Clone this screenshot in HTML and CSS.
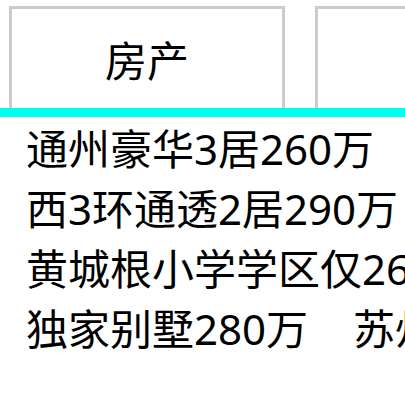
FILE: index.html
```html
<!DOCTYPE html>
<html lang="zh-CN">
<head>
<meta charset="utf-8">
<title>房产</title>
<link rel="stylesheet" href="styles.css">
</head>
<body>
<div class="tabs">
  <div class="tab">房产</div>
  <div class="tab"></div>
</div>
<div class="panel">
  <div class="row">通州豪华3居260万</div>
  <div class="row">西3环通透2居290万</div>
  <div class="row">黄城根小学学区仅260万</div>
  <div class="row"><span class="item">独家别墅280万</span><span class="item">苏州园林独栋</span></div>
</div>
</body>
</html>
```

FILE: styles.css
```css
html, body {
  margin: 0;
  padding: 0;
  background: #fff;
  overflow: hidden;
}
body {
  font-family: "Noto Sans", "Noto Sans CJK SC", sans-serif;
  font-size: 42px;
  color: #000;
  width: 405px;
  height: 404px;
}
.tabs {
  display: flex;
  gap: 30px;
  padding: 6px 0 0 9px;
}
.tab {
  box-sizing: border-box;
  flex: 0 0 276px;
  height: 102px;
  border: 3px solid #cccccc;
  border-bottom: 0;
  padding-top: 4px;
  display: flex;
  align-items: center;
  justify-content: center;
  line-height: 60px;
}
.panel {
  border-top: 9px solid #00ffee;
  padding: 2px 0 0 26px;
  line-height: 60px;
  white-space: nowrap;
}
.item {
  margin-right: 45px;
}
```
